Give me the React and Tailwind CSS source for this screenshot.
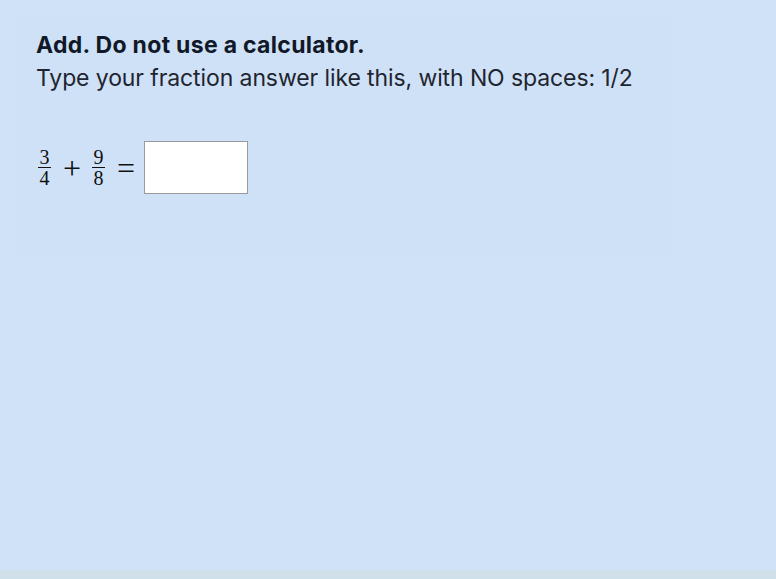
export default function App() {
  return (
    <div className="min-h-[579px] w-[776px] bg-[#d0e2f7] flex flex-col">
      <div className="pt-[15px] pl-4 pr-[106px]">
        <div className="bg-[#cfe1f6] h-[240px] pl-5 pt-[16px]" style={{ fontFamily: "Inter, 'Liberation Sans', sans-serif" }}>
          <h1 className="text-[23px] leading-[28px] font-bold text-[#111827] tracking-[0.3px]">Add. Do not use a calculator.</h1>
          <p className="text-[23px] leading-[28px] mt-[5px] text-[#1f2530] tracking-[-0.1px]">
            Type your fraction answer like this, with NO spaces: 1/2
          </p>
          <div className="mt-[49px] flex items-center text-[#111]" style={{ fontFamily: "'Liberation Serif', serif" }}>
            <Frac n="3" d="4" />
            <span className="text-[32px] leading-none ml-[10px] mr-[9px]">+</span>
            <Frac n="9" d="8" />
            <span className="text-[32px] leading-none ml-[10px] mr-[9px]">=</span>
            <input
              type="text"
              className="w-[104px] h-[53px] bg-white border border-[#9a9a9a] outline-none"
            />
          </div>
        </div>
      </div>
      <div className="flex-1" />
      <div className="h-[9px] bg-[#d0e0ea]" />
    </div>
  );
}

function Frac({ n, d }) {
  return (
    <span className="inline-flex flex-col items-center text-[20px] leading-[18px] px-[2px]">
      <span>{n}</span>
      <span className="w-[13px] border-t border-[#111] my-[1px]" />
      <span>{d}</span>
    </span>
  );
}
